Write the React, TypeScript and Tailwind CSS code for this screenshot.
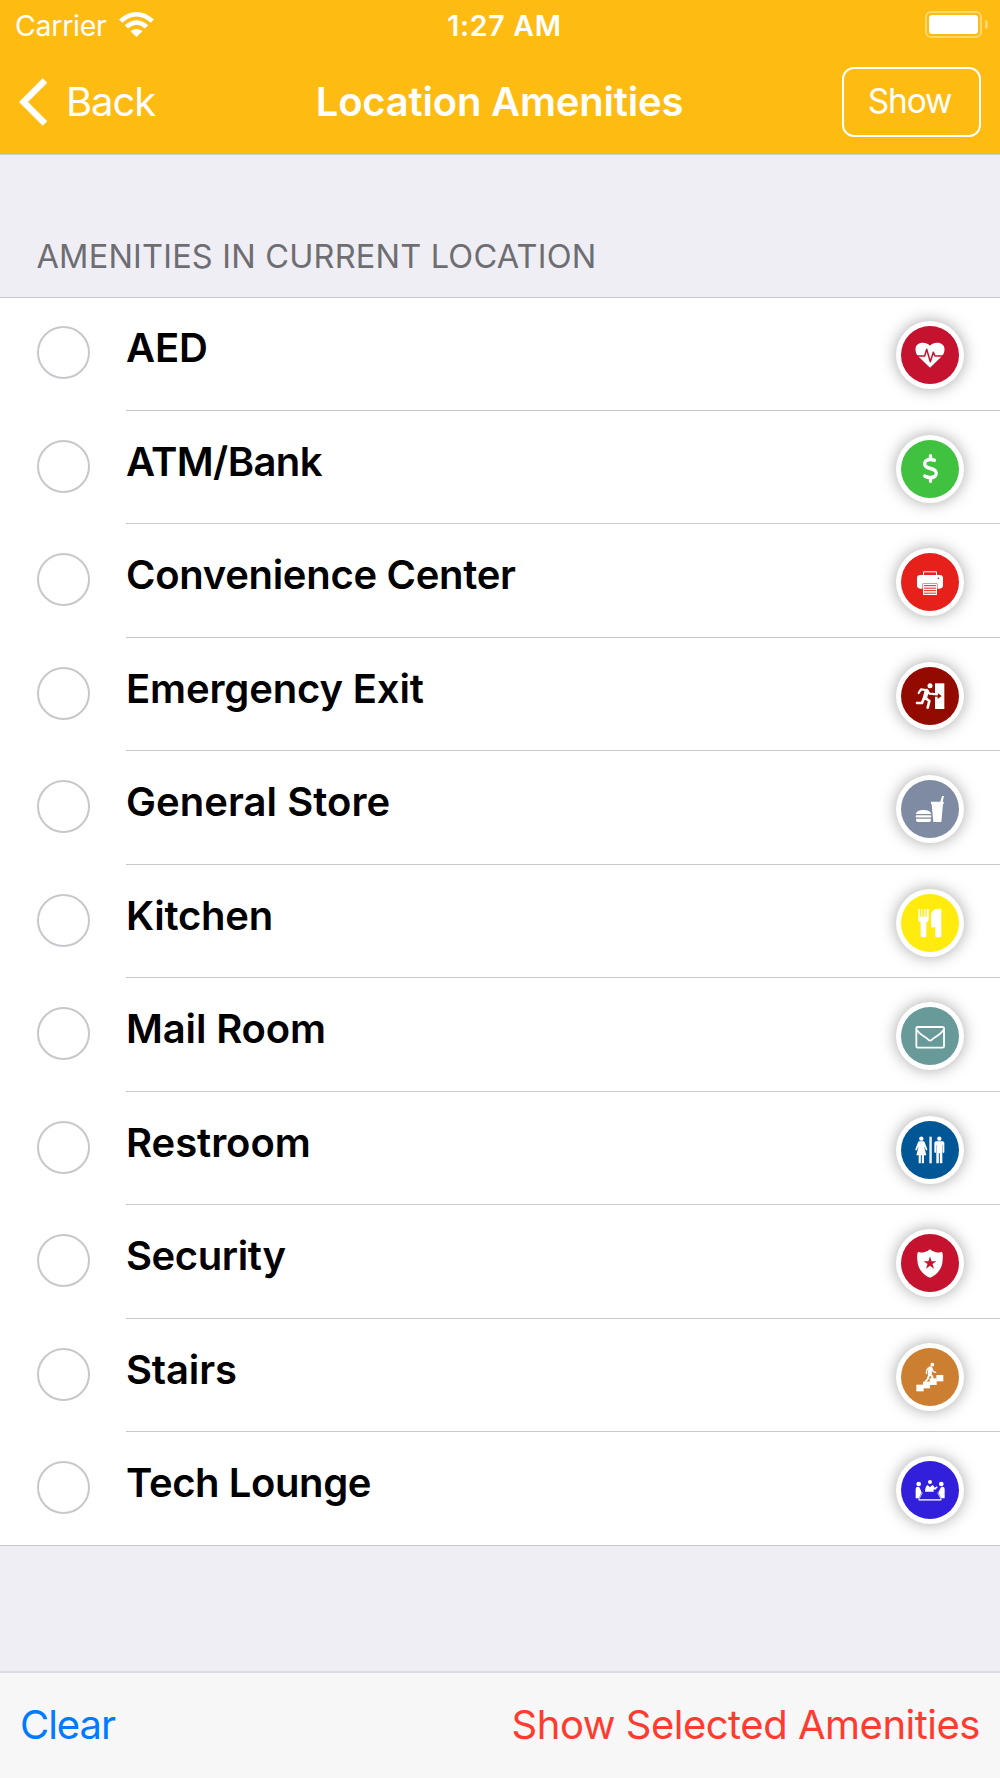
import { useState, type ReactNode } from "react"
import { FaDollarSign } from "react-icons/fa6"

type Amenity = {
  name: string
  color: string
  icon: ReactNode
  tracking?: string
}

// All badge glyphs are drawn on a 174x174 canvas that fills the coloured disc
function Glyph({ children }: { children: ReactNode }) {
  return (
    <svg viewBox="0 0 174 174" className="h-[58px] w-[58px]" fill="white">
      {children}
    </svg>
  )
}

const amenities: Amenity[] = [
  {
    name: "AED",
    color: "bg-[#c5122f]",
    icon: (
      <Glyph>
        <path d="M87 125L53 92C45 84 42 74 44 65C47 50 72 44 87 59C102 44 127 50 130 65C132 74 129 84 121 92Z" />
        <path d="M42 90H71L77 70L88 107L97 79L102 90H132" fill="none" stroke="#c5122f" strokeWidth="4.5" strokeLinejoin="round" />
      </Glyph>
    ),
  },
  {
    name: "ATM/Bank",
    color: "bg-[#40c140]",
    tracking: "tracking-[-0.6px]",
    icon: <FaDollarSign className="h-[29px] w-[29px] scale-x-90 text-white" />,
  },
  {
    name: "Convenience Center",
    color: "bg-[#e6201b]",
    tracking: "tracking-[-0.3px]",
    icon: (
      <Glyph>
        <path d="M67.500 70V56.500H106.500V70" fill="none" stroke="white" strokeWidth="3" />
        <rect x="48" y="66" width="78" height="41" rx="10" />
        <circle cx="112" cy="76" r="2.500" fill="#e6201b" />
        <rect x="64.500" y="91.500" width="45" height="20" fill="#e6201b" />
        <rect x="66" y="93" width="42" height="33" />
        <path d="M69 98H105M69 105.500H105M69 113H105M69 120.500H105" stroke="#e6201b" strokeWidth="3" />
      </Glyph>
    ),
  },
  {
    name: "Emergency Exit",
    color: "bg-[#930b00]",
    icon: (
      <Glyph>
        <rect x="102" y="49" width="28" height="77" />
        <circle cx="87" cy="56" r="7.500" />
        <g fill="none" stroke="white" strokeLinecap="round" strokeLinejoin="round">
          <path d="M53 78L60 67L75 69" strokeWidth="6.5" />
          <path d="M78 69L85 80L101 81" strokeWidth="6.5" />
          <path d="M77 72L72 92" strokeWidth="13" />
          <path d="M73 93L85 102L80 122" strokeWidth="8" />
          <path d="M69 93L63 108L48 108" strokeWidth="8" />
        </g>
        <path d="M102 84.500H110V78L122 87L110 96V89.500H102Z" fill="#930b00" />
        <path d="M96 79.500H111V84.500H96Z" />
      </Glyph>
    ),
  },
  {
    name: "General Store",
    color: "bg-[#7f8ba2]",
    tracking: "tracking-[0.05px]",
    icon: (
      <Glyph>
        <path d="M90 65H118L123 48H129L125 65H128V72H126L121 126H97L92 72H90Z" />
        <path d="M45 102C45 86 90 86 90 102Z" />
        <rect x="44" y="105.500" width="47" height="7" rx="3" />
        <path d="M45 116H90V119C90 124 87 126 83 126H52C48 126 45 124 45 119Z" />
      </Glyph>
    ),
  },
  {
    name: "Kitchen",
    color: "bg-[#ffeb0e]",
    tracking: "tracking-[-0.25px]",
    icon: (
      <Glyph>
        <path d="M52 46Q54 42 56 46V68H60V46Q62 42 64 46V68H69V46Q71 42 73 46V68H77V46Q80 42 83 46V75Q83 84 76 86V126Q76 130 72 130H63Q59 130 59 126V86Q52 84 52 75Z" />
        <path d="M117 44H121V126Q121 130 117 130H107Q103 130 103 126V100H90V66Q90 44 112 44Z" />
      </Glyph>
    ),
  },
  {
    name: "Mail Room",
    color: "bg-[#679a99]",
    icon: (
      <Glyph>
        <g fill="none" stroke="white" strokeWidth="5.500">
          <rect x="46" y="60" width="83" height="62" rx="4" />
          <path d="M47 68C56 84 75 90 82 98Q87 104 93 98C100 90 119 84 128 68" />
        </g>
      </Glyph>
    ),
  },
  {
    name: "Restroom",
    color: "bg-[#015696]",
    tracking: "tracking-[-0.05px]",
    icon: (
      <Glyph>
        <circle cx="61" cy="53" r="6.500" />
        <path d="M55 61H67Q70 61 71 64L79 85Q79 89 75 88L69 76L76 103H69V127H62.500V103H59.500V127H53V103H46L53 76L47 88Q43 89 43 85L51 64Q52 61 55 61Z" />
        <rect x="85" y="47" width="7.500" height="80" opacity="0.9" />
        <circle cx="115" cy="53" r="6.500" />
        <path d="M105 61H125Q130 61 130 66V94Q127 98 125 94V72H124V127H116.500V97H113.500V127H106V72H105V94Q102 98 100 94V66Q100 61 105 61Z" />
      </Glyph>
    ),
  },
  {
    name: "Security",
    color: "bg-[#c5122f]",
    tracking: "tracking-[-0.4px]",
    icon: (
      <Glyph>
        <path d="M87 46Q95 54 105 55Q114 57 122 53C126 55 126 70 125 78C124 106 106 124 87 131C68 124 50 106 49 78C48 70 48 55 52 53Q60 57 69 55Q79 54 87 46Z" />
        <path d="M87 67L91.500 81.500H106L94.500 90L99 104L87 95.500L75 104L79.500 90L68 81.500H82.500Z" fill="#c5122f" />
      </Glyph>
    ),
  },
  {
    name: "Stairs",
    color: "bg-[#cc7f30]",
    icon: (
      <Glyph>
        <rect x="46" y="110" width="22" height="20" />
        <rect x="66" y="101" width="21" height="20" />
        <rect x="86" y="91" width="21" height="20" />
        <rect x="106" y="81" width="21" height="19" />
        <circle cx="94" cy="50" r="5.500" />
        <g fill="none" stroke="white" strokeLinecap="round" strokeLinejoin="round">
          <path d="M88 61L86 78" strokeWidth="12" />
          <path d="M82 60L77 67L76 76" strokeWidth="4" />
          <path d="M92 60L97 71L104 73" strokeWidth="4" />
          <path d="M85 80L80 93L73 102" strokeWidth="6" />
          <path d="M88 79L94 86L94 97" strokeWidth="6" />
        </g>
      </Glyph>
    ),
  },
  {
    name: "Tech Lounge",
    color: "bg-[#321fdb]",
    tracking: "tracking-[-0.4px]",
    icon: (
      <Glyph>
        <circle cx="87" cy="63" r="6" />
        <circle cx="53" cy="69" r="7" />
        <circle cx="121" cy="69" r="7" />
        <path d="M72 92Q73 74 80 72L87 79L94 72Q98 73 101 80L108 76L110 79L103 86L98 85V92Z" />
        <path d="M44 112V84Q44 77 51 77Q57 77 58 85L62 94L54 112Z" />
        <path d="M131 112V84Q131 77 124 77Q118 77 117 85L112 94L120 112Z" />
        <path d="M64 95L53 116H121L110 95" fill="none" stroke="#cfcaf8" strokeWidth="3" />
        <path d="M53 116.500H121" stroke="#cfcaf8" strokeWidth="5" />
      </Glyph>
    ),
  },
]

function WifiIcon() {
  return (
    <svg viewBox="0 0 104 74" className="h-[25px] w-[35px]" fill="white">
      <path d="M0 22Q52 -22 104 22L94 32Q52 -5 10 32Z" />
      <path d="M17 39Q52 9 87 39L77 49Q52 27 27 49Z" />
      <path d="M34 57Q52 43 70 57L52 74Z" />
    </svg>
  )
}

function Battery() {
  return (
    <div className="flex items-center gap-[3px]">
      <div className="h-[27px] w-[57px] rounded-[6px] border-2 border-white/40 p-[2px]">
        <div className="h-full rounded-[3px] bg-white" />
      </div>
      <div className="h-[9px] w-[3px] rounded-r-full bg-white/40" />
    </div>
  )
}

export default function App() {
  const [selected, setSelected] = useState<string[]>([])

  const toggle = (name: string) => {
    setSelected((prev) => (prev.includes(name) ? prev.filter((n) => n !== name) : [...prev, name]))
  }

  return (
    <div className="flex h-[1778px] w-[1000px] flex-col overflow-hidden bg-[#efeef4] font-['Inter',sans-serif]">
      {/* Status bar + navigation */}
      <header className="h-[155px] shrink-0 border-b border-[#cfced0] bg-[#febb12] text-white">
        <div className="grid h-[49px] grid-cols-3 items-center pr-3 pl-[15px] text-[28.5px] leading-7">
          <div className="flex items-center gap-[13px]">
            <span className="pt-0.5 tracking-[-0.28px]">Carrier</span>
            <WifiIcon />
          </div>
          <span className="pt-0.5 pl-1.5 text-center font-semibold tracking-[0.73px]">1:27 AM</span>
          <div className="flex justify-end">
            <Battery />
          </div>
        </div>

        <nav className="grid h-[105px] grid-cols-[280px_1fr_280px] items-center pr-[19px] pl-[19px] text-[40px] leading-10">
          <button className="flex items-center gap-[19px] tracking-[-1.05px]">
            <svg viewBox="0 0 28 48" className="h-12 w-7" fill="none" stroke="white" strokeWidth="6.5">
              <path d="M26 2.500L4.500 24L26 45.500" />
            </svg>
            Back
          </button>
          <h1 className="pr-px text-center font-semibold tracking-[-0.2px] whitespace-nowrap">Location Amenities</h1>
          <button className="h-[70px] w-[139px] justify-self-end rounded-[12px] border-2 border-white pr-1 pb-0.5 text-[33.5px] tracking-[-1.2px]">
            Show
          </button>
        </nav>
      </header>

      {/* Amenities list */}
      <h2 className="h-[142px] shrink-0 pt-[86px] pl-[36.5px] text-[32.5px] leading-8 tracking-[0.2px] text-[#6d6d72]">
        AMENITIES IN CURRENT LOCATION
      </h2>
      <ul className="shrink-0 border-y border-[#c8c7cc] bg-white">
        {amenities.map((item, i) => (
          <li key={item.name} className="flex h-[113.5px] pl-[36.5px] last:h-[112px]" onClick={() => toggle(item.name)}>
            <span
              className={`mt-[28px] h-[53px] w-[53px] shrink-0 rounded-full border-2 ${selected.includes(item.name) ? "border-[#007aff] bg-[#007aff]" : "border-[#c7c7cc]"}`}
            />
            <div
              className={`mb-px ml-[36.5px] flex flex-1 items-start justify-between pr-[36px] ${i < amenities.length - 1 ? "border-b border-[#c8c7cc]" : ""}`}
            >
              <span className={`pt-[30px] text-[40px] leading-10 font-semibold text-black ${item.tracking ?? "tracking-[-0.15px]"}`}>
                {item.name}
              </span>
              <span className="mt-[23px] rounded-full bg-white p-[5px] shadow-[0_0_16px_rgba(0,0,0,0.35)]">
                <span className={`flex h-[58px] w-[58px] items-center justify-center rounded-full ${item.color}`}>{item.icon}</span>
              </span>
            </div>
          </li>
        ))}
      </ul>

      {/* Bottom toolbar */}
      <footer className="mt-auto flex h-[107px] shrink-0 items-center justify-between border-t-2 border-[#dcdce0] bg-[#f7f7f7] px-5 pb-0.5 text-[40px] leading-10">
        <button className="tracking-[-1.05px] text-[#007aff]" onClick={() => setSelected([])}>
          Clear
        </button>
        <button className="tracking-[-0.49px] text-[#ff3b30]">Show Selected Amenities</button>
      </footer>
    </div>
  )
}
